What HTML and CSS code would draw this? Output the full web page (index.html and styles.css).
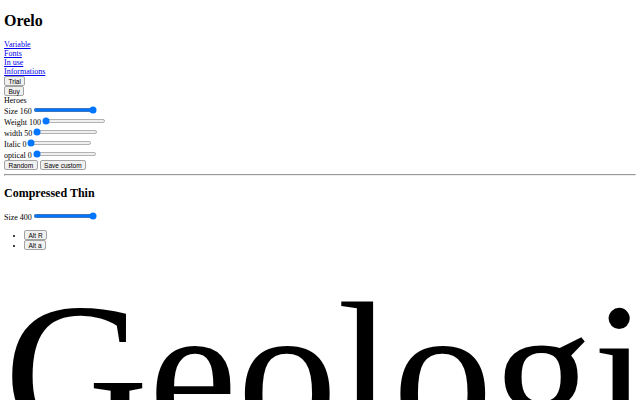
FILE: index.html
```html
<!DOCTYPE html>
<html lang="en">
<head>
    <meta charset="UTF-8">
    <meta name="viewport" content="width=device-width, initial-scale=1.0">
    <title>Orelo</title>
    <link rel="stylesheet" href="styles.css">
</head>
<body>
    <h1>Orelo</h1>
    <nav class="menu">
        <div><a href="#">Variable</a></div>
        <div><a href="#">Fonts</a></div>
        <div><a href="#">In use</a></div>
        <div><a href="#">Informations</a></div>
    </nav>
    <div><button>Trial</button></div>
    <div><button>Buy</button></div>

    <div class="tester">
        <div>Heroes</div>
        <div>Size 160<input type="range" min="10" max="160" value="160"></div>
        <div>Weight 100<input type="range" min="100" max="900" value="100"></div>
        <div>width 50<input type="range" min="50" max="100" value="50"></div>
        <div>Italic 0<input type="range" min="0" max="1" value="0"></div>
        <div>optical 0<input type="range" min="0" max="1" value="0"></div>
        <button>Random</button> <button>Save custom</button>
    </div>

    <hr>

    <h2>Compressed Thin</h2>
    <p>Size 400<input type="range" min="10" max="400" value="400"></p>
    <ul>
        <li><button>Alt R</button></li>
        <li><button>Alt a</button></li>
    </ul>

    <div class="specimen">
        <div class="specimen-text">Geologists</div>
    </div>
</body>
</html>
```

FILE: styles.css
```css
html {
    zoom: 0.5;
}

body {
    font-family: "Liberation Serif", "Times New Roman", serif;
    overflow: hidden;
}

h1 {
    margin-top: 15px;
}

button {
    font-family: "Liberation Sans", Arial, sans-serif;
    font-size: 13px;
    color: #000;
    background: #f0f0f0;
    border: 1px solid #a3a3a3;
    border-radius: 4px;
    padding: 1px 7px;
}

.specimen {
    overflow: hidden;
}

.specimen-text {
    font-size: 400px;
    white-space: nowrap;
    line-height: normal;
}
```
